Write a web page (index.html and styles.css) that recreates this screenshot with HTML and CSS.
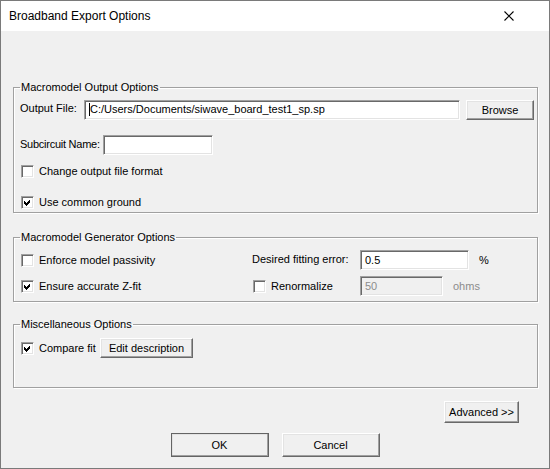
FILE: index.html
```html
<!DOCTYPE html>
<html lang="en">
<head>
  <meta charset="UTF-8">
  <title>Broadband Export Options</title>
  <link rel="stylesheet" href="styles.css">
</head>
<body>
  <div class="window">
    <!-- Barre de titre -->
    <div class="titlebar">
      <span class="title">Broadband Export Options</span>
      <svg class="close" width="10" height="10" viewBox="0 0 10 10">
        <path d="M0.5 0.5 L9.5 9.5 M9.5 0.5 L0.5 9.5" stroke="#000" stroke-width="1.1" fill="none"/>
      </svg>
    </div>

    <div class="content">
      <!-- Sortie du macromodele -->
      <fieldset class="group group-output">
        <legend>Macromodel Output Options</legend>
        <div class="row row-file">
          <span class="lbl lbl-file">Output File:</span>
          <div class="field field-file"><span class="caret"></span>C:/Users/Documents/siwave_board_test1_sp.sp</div>
          <button class="btn btn-browse">Browse</button>
        </div>
        <div class="row row-sub">
          <span class="lbl lbl-sub">Subcircuit Name:</span>
          <div class="field field-sub"></div>
        </div>
        <div class="check-row row-format">
          <span class="box"></span>
          <span>Change output file format</span>
        </div>
        <div class="check-row row-ground">
          <span class="box"><svg class="tick" width="7" height="7" viewBox="0 0 7 7"><path d="M0 2 L2 4 L6 0 L6 3 L2 7 L0 5 Z" fill="#000"/></svg></span>
          <span>Use common ground</span>
        </div>
      </fieldset>

      <!-- Generateur -->
      <fieldset class="group group-gen">
        <legend>Macromodel Generator Options</legend>
        <div class="gen-grid">
          <div class="check-row">
            <span class="box"></span>
            <span>Enforce model passivity</span>
          </div>
          <span class="lbl">Desired fitting error:</span>
          <div class="with-unit">
            <div class="field field-error">0.5</div>
            <span class="unit">%</span>
          </div>

          <div class="check-row">
            <span class="box"><svg class="tick" width="7" height="7" viewBox="0 0 7 7"><path d="M0 2 L2 4 L6 0 L6 3 L2 7 L0 5 Z" fill="#000"/></svg></span>
            <span>Ensure accurate Z-fit</span>
          </div>
          <div class="check-row">
            <span class="box"></span>
            <span>Renormalize</span>
          </div>
          <div class="with-unit">
            <div class="field field-ohms disabled">50</div>
            <span class="unit disabled-text">ohms</span>
          </div>
        </div>
      </fieldset>

      <!-- Divers -->
      <fieldset class="group group-misc">
        <legend>Miscellaneous Options</legend>
        <div class="row row-misc">
          <div class="check-row check-compare">
            <span class="box"><svg class="tick" width="7" height="7" viewBox="0 0 7 7"><path d="M0 2 L2 4 L6 0 L6 3 L2 7 L0 5 Z" fill="#000"/></svg></span>
            <span>Compare fit</span>
          </div>
          <button class="btn btn-edit">Edit description</button>
        </div>
      </fieldset>

      <div class="advanced-row">
        <button class="btn btn-advanced">Advanced &gt;&gt;</button>
      </div>

      <div class="actions">
        <button class="btn btn-ok">OK</button>
        <button class="btn btn-cancel">Cancel</button>
      </div>
    </div>
  </div>
</body>
</html>
```

FILE: styles.css
```css
/* Global */
html, body {
  margin: 0;
  padding: 0;
  background: #f0f0f0;
}

.window {
  width: 550px;
  height: 469px;
  box-sizing: border-box;
  border: 1px solid #7a7a7a;
  background: #f0f0f0;
  overflow: hidden;
  font-family: "Liberation Sans", Arial, sans-serif;
  font-size: 11px;
  color: #000;
}

/* Barre de titre */
.titlebar {
  height: 30px;
  background: #fff;
  display: flex;
  align-items: center;
  justify-content: space-between;
  padding: 0 35px 0 8px;
}

.title {
  font-family: "Liberation Sans", Arial, sans-serif;
  font-size: 12px;
  margin-top: -1px;
}

.close {
  display: block;
}

.content {
  padding-top: 50px;
}

/* Groupes */
.group {
  margin: 0 0 0 12px;
  width: 525px;
  box-sizing: border-box;
  border: 1px solid #a0a0a0;
  box-shadow: inset 1px 1px 0 #fff, 1px 1px 0 #fff;
  padding: 0 0 0 6px;
  min-inline-size: 0;
}

.group legend {
  padding: 0 1px;
  line-height: 13px;
  margin-left: 0;
}

.group-output {
  padding-top: 6px;
  padding-bottom: 3px;
}

.group-gen {
  margin-top: 18px;
  padding-top: 6px;
  padding-bottom: 5px;
}

.group-misc {
  margin-top: 16px;
  padding-top: 7px;
  padding-bottom: 29px;
}

.row {
  display: flex;
  align-items: center;
}

.lbl {
  line-height: 13px;
  white-space: nowrap;
  flex: none;
}

.lbl-file {
  width: 64px;
  padding-bottom: 4px;
}

.lbl-sub {
  width: 83px;
  padding-bottom: 1px;
  letter-spacing: -0.25px;
}

/* Champs */
.field {
  box-sizing: border-box;
  height: 20px;
  background: #fff;
  border: 1px solid;
  border-color: #a0a0a0 #fff #fff #a0a0a0;
  box-shadow: inset 1px 1px 0 #696969, inset -1px -1px 0 #e3e3e3;
  padding: 3px 0 0 4px;
  line-height: 13px;
  white-space: nowrap;
  overflow: hidden;
  flex: none;
}

.field-file {
  width: 376px;
  padding-left: 4px;
  padding-top: 2px;
}

.caret {
  display: inline-block;
  width: 1px;
  height: 13px;
  background: #000;
  vertical-align: top;
}

.row-sub {
  margin-top: 15px;
}

.field-sub {
  width: 110px;
}

.field-error {
  width: 109px;
}

.field-ohms {
  width: 83px;
}

.field.disabled {
  background: #f0f0f0;
  color: #8c8c8c;
}

.disabled-text {
  color: #8c8c8c;
}

/* Cases a cocher */
.check-row {
  display: flex;
  align-items: center;
  padding-left: 1px;
  line-height: 13px;
  white-space: nowrap;
}

.box {
  box-sizing: border-box;
  width: 13px;
  height: 13px;
  margin-right: 5px;
  background: #fff;
  border: 1px solid;
  border-color: #a0a0a0 #fff #fff #a0a0a0;
  box-shadow: inset 1px 1px 0 #696969, inset -1px -1px 0 #e3e3e3;
  position: relative;
  flex: none;
}

.tick {
  display: block;
  position: absolute;
  left: 2px;
  top: 2px;
  shape-rendering: crispEdges;
}

.row-format {
  margin-top: 10px;
}

.row-ground {
  margin-top: 18px;
}

/* Grille du generateur */
.gen-grid {
  display: grid;
  grid-template-columns: 232px 108px auto;
  grid-auto-rows: 20px;
  row-gap: 6px;
  align-items: center;
}

.gen-grid .lbl {
  padding-bottom: 1px;
}

.with-unit {
  display: flex;
  align-items: center;
}

.unit {
  margin-left: 10px;
}

/* Boutons */
.btn {
  box-sizing: border-box;
  font-family: "Liberation Sans", Arial, sans-serif;
  font-size: 11px;
  color: #000;
  background: #f0f0f0;
  border: 1px solid;
  border-color: #fff #696969 #696969 #fff;
  box-shadow: inset -1px -1px 0 #a0a0a0, inset 1px 1px 0 #e3e3e3;
  padding: 0;
  margin: 0;
  cursor: pointer;
  flex: none;
}

.btn-browse {
  width: 68px;
  height: 20px;
  margin-left: 6px;
}

.check-compare {
  width: 79px;
}

.btn-edit {
  width: 93px;
  height: 20px;
}

.advanced-row {
  display: flex;
  justify-content: flex-end;
  padding-right: 30px;
  margin-top: 13px;
}

.btn-advanced {
  width: 75px;
  height: 22px;
}

.actions {
  display: flex;
  justify-content: center;
  gap: 13px;
  margin-top: 10px;
}

.btn-ok,
.btn-cancel {
  width: 98px;
  height: 24px;
}

.btn-ok {
  outline: 1px solid #646464;
  outline-offset: -1px;
  border-color: #fff #000 #000 #fff;
}
```
